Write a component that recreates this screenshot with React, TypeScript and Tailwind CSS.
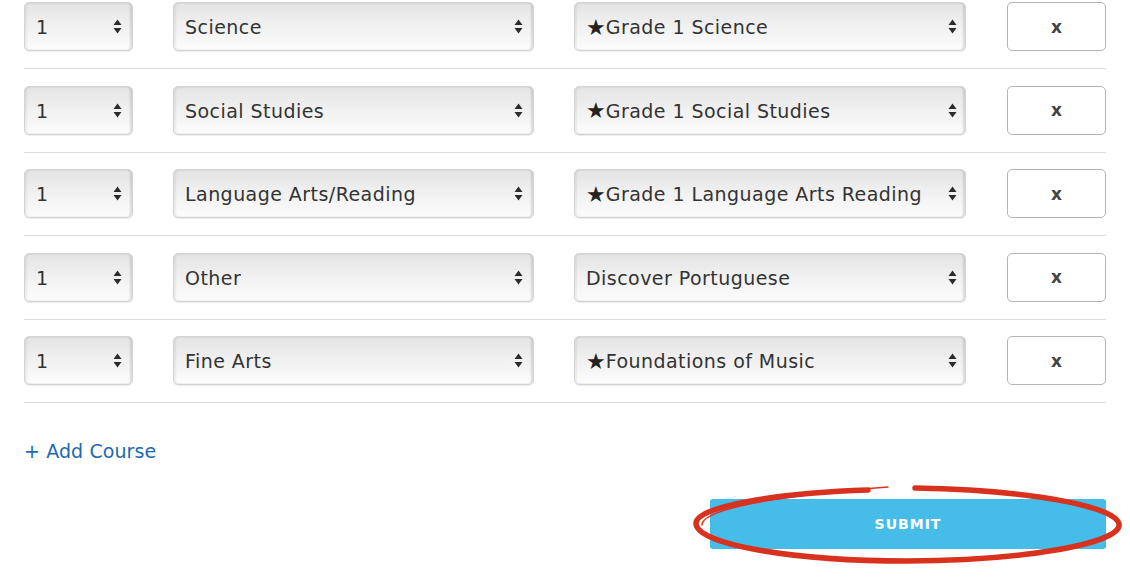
import React from "react";

type Row = { grade: string; subject: string; course: string; star?: boolean };

const rows: Row[] = [
  { grade: "1", subject: "Science", course: "Grade 1 Science", star: true },
  { grade: "1", subject: "Social Studies", course: "Grade 1 Social Studies", star: true },
  { grade: "1", subject: "Language Arts/Reading", course: "Grade 1 Language Arts Reading", star: true },
  { grade: "1", subject: "Other", course: "Discover Portuguese" },
  { grade: "1", subject: "Fine Arts", course: "Foundations of Music", star: true },
];

const font = { fontFamily: '"DejaVu Sans", "Noto Sans", sans-serif' };

const Arrows = () => (
  <svg width="9" height="15" viewBox="0 0 9 15" className="shrink-0">
    <path d="M4.5 0.5 L8.5 6 L0.5 6 Z" fill="#2b2b2b" />
    <path d="M4.5 14.5 L8.5 9 L0.5 9 Z" fill="#2b2b2b" />
  </svg>
);

const FakeSelect = ({ value, pr, star }: { value: string; pr: string; star?: boolean }) => (
  <div
    className={`flex h-[49px] items-center justify-between rounded-[5px] border border-[#d4d4d4] bg-gradient-to-b from-[#e4e4e4] via-[#f1f1f1] to-[#fcfcfc] pl-[11px] ${pr} text-[19px] tracking-[0.45px] text-[#333] shadow-[inset_-2px_0_2px_rgba(0,0,0,0.12),inset_2px_0_2px_rgba(0,0,0,0.06),0_1px_1px_rgba(0,0,0,0.08)]`}
  >
    <span className="flex items-center truncate pt-[2px]">
      {star && <span className="text-[22px] leading-none tracking-normal text-[#222]">★</span>}
      {value}
    </span>
    <Arrows />
  </div>
);

export default function App() {
  return (
    <div className="min-h-[577px] w-[1130px] overflow-hidden bg-white px-[24px]" style={font}>
      {rows.map((r, i) => (
        <div
          key={i}
          className={`grid grid-cols-[109px_361px_392px_1fr] gap-x-[40px] border-b border-[#dcdcdc] pb-[17px] ${
            i === 0 ? "pt-[2px]" : "pt-[16.5px]"
          }`}
        >
          <FakeSelect value={r.grade} pr="pr-[10px]" />
          <FakeSelect value={r.subject} pr="pr-[10px]" />
          <FakeSelect value={r.course} pr="pr-[8px]" star={r.star} />
          <button className="ml-[1px] flex h-[49px] items-center justify-center rounded-[5px] border border-[#b5b5b5] bg-white pt-[2px] text-[17px] font-semibold text-[#444]">
            x
          </button>
        </div>
      ))}

      <div className="pt-[34px]">
        <a className="text-[19px] tracking-[0.1px] text-[#1d6aae]">+ Add Course</a>
      </div>

      <div className="mt-[33px] flex justify-end">
        <div className="relative">
          <button className="flex h-[50px] w-[396px] items-center justify-center rounded-[3px] bg-[#46bde9] pt-[2px] text-[14px] font-bold tracking-[1px] text-white">
            SUBMIT
          </button>
          <svg
            width="436"
            height="86"
            viewBox="0 0 436 86"
            className="pointer-events-none absolute left-[-20px] top-[-17px]"
          >
            <path
              d="M225 6 C340 8, 432 25, 429 44 C426 62, 330 79, 217 79 C100 79, 8 62, 6 42 C4 24, 90 11, 178 8"
              fill="none"
              stroke="#d8321e"
              strokeWidth="5.5"
              strokeLinecap="round"
            />
            <path
              d="M12 43 C12 26, 100 12, 198 5"
              fill="none"
              stroke="#d8321e"
              strokeWidth="1.5"
              strokeLinecap="round"
            />
          </svg>
        </div>
      </div>
    </div>
  );
}
